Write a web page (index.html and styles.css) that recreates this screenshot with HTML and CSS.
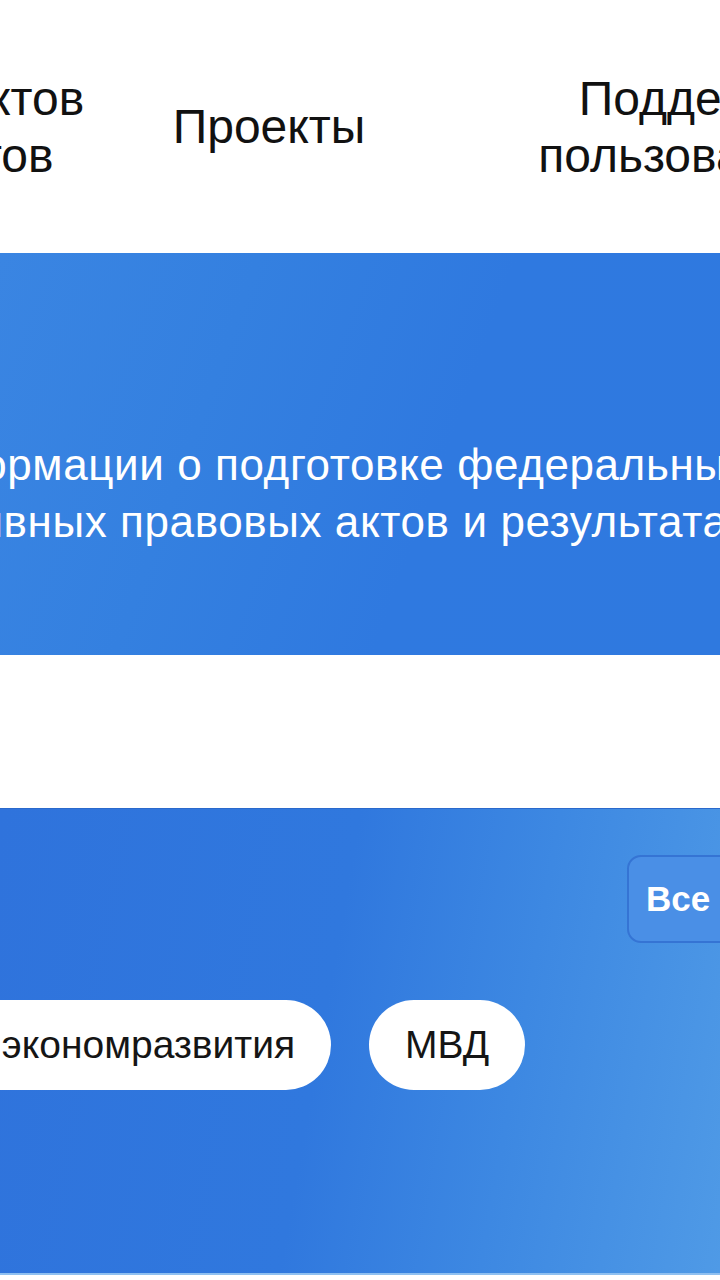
FILE: index.html
```html
<!DOCTYPE html>
<html lang="ru">
<head>
<meta charset="utf-8">
<title>Проекты нормативных правовых актов</title>
<link rel="stylesheet" href="styles.css">
</head>
<body>
<div class="page">
  <nav class="nav">
    <a class="nav-item" href="#">Обсуждение проектов<br>нормативных актов</a>
    <a class="nav-item" href="#">Проекты</a>
    <a class="nav-item" href="#">Поддержка<br>пользователей</a>
  </nav>

  <section class="hero">
    <p class="hero-text">Сайт для размещения информации о подготовке федеральными органами исполнительной власти<br>нормативных правовых актов и результатах их обсуждения.</p>
  </section>

  <section class="filters">
    <div class="filters-head">
      <button class="select" type="button">Все ведомства</button>
    </div>
    <div class="pills">
      <span class="pill">Минэкономразвития</span>
      <span class="pill">МВД</span>
    </div>
  </section>
</div>
</body>
</html>
```

FILE: styles.css
```css
html, body {
  margin: 0;
  padding: 0;
  background: #ffffff;
}

body {
  width: 720px;
  height: 1280px;
  overflow: hidden;
  font-family: "Liberation Sans", Arial, sans-serif;
}

.page {
  width: 720px;
}

.nav {
  height: 253px;
  display: grid;
  grid-template-columns: 434px 430px 440px;
  justify-items: center;
  align-items: center;
  margin-left: -380px;
}

.nav-item {
  text-align: center;
  font-size: 48px;
  line-height: 57px;
  color: #111111;
  text-decoration: none;
  white-space: nowrap;
}

.hero {
  height: 402px;
  box-sizing: border-box;
  padding-top: 183px;
  background: linear-gradient(110deg, #3a85e2 0%, #3480e0 30%, #2f79e0 60%, #2f79df 100%);
  overflow: hidden;
}

.hero-text {
  margin: 0 0 0 -742px;
  width: 2400px;
  text-align: center;
  color: #ffffff;
  font-size: 44px;
  letter-spacing: 0.6px;
  line-height: 57px;
  white-space: nowrap;
}

.filters {
  margin-top: 153px;
  height: 467px;
  box-sizing: border-box;
  padding-top: 46px;
  border-top: 1px solid #2a69cc;
  border-bottom: 2px solid #8fc0f0;
  background: linear-gradient(100deg, #2f73dc 0%, #3078de 45%, #3d88e2 70%, #4f9ae6 100%);
  overflow: hidden;
}

.filters-head {
  display: flex;
  padding-left: 627px;
}

.select {
  flex: none;
  height: 88px;
  padding: 0 40px 0 17px;
  border: 2px solid #3574d4;
  border-radius: 14px;
  background: #4a8fe6;
  color: #ffffff;
  font-family: "Liberation Sans", Arial, sans-serif;
  font-size: 35px;
  font-weight: bold;
  white-space: nowrap;
}

.pills {
  display: flex;
  gap: 38px;
  margin-top: 57px;
  margin-left: -110px;
}

.pill {
  flex: none;
  height: 90px;
  display: flex;
  align-items: center;
  padding: 0 36px;
  border-radius: 45px;
  background: #ffffff;
  color: #151515;
  font-size: 39px;
  white-space: nowrap;
}
```
